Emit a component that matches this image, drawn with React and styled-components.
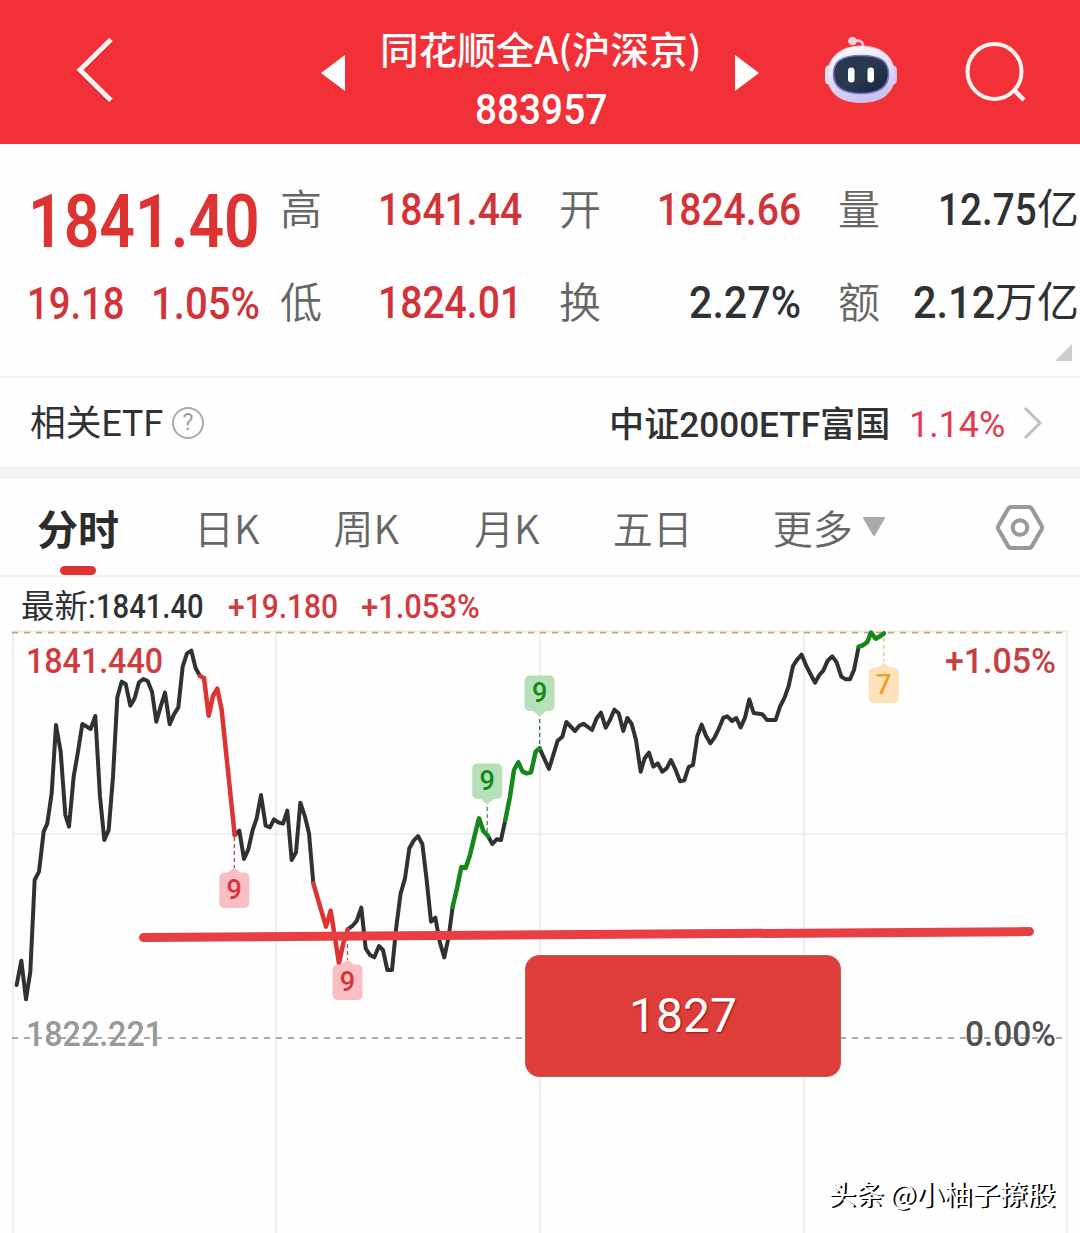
import React, { useLayoutEffect, useRef, useState } from "react";
import styled, { createGlobalStyle } from "styled-components";

const Global = createGlobalStyle`
  *, *::before, *::after { box-sizing: border-box; }
  body { margin: 0; background: #fefefe; overflow: hidden; }
`;

const RED = "#dd3333";
const INK = "#303133";
const NUM = '"Roboto", "Noto Sans CJK SC", sans-serif';
const CJK = '"Noto Sans CJK SC", "Roboto", sans-serif';

const Page = styled.main`
  width: 1080px;
  height: 1233px;
  overflow: hidden;
  background: #fefefe;
  color: ${INK};
  font-family: ${NUM};
  display: flex;
  flex-direction: column;
`;

const FitBox = styled.span`
  display: inline-block;
  flex: none;
  width: ${(p) => p.$w}px;
  height: ${(p) => p.$size * 1.2}px;
  line-height: ${(p) => p.$size * 1.2}px;
  margin-top: ${(p) => p.$dy || 0}px;
  margin-left: ${(p) => p.$ml || 0}px;
  font-family: ${(p) => (p.$cjk ? CJK : NUM)};
  font-size: ${(p) => p.$size}px;
  font-weight: ${(p) => p.$weight || 500};
  color: ${(p) => p.$color || "inherit"};
  white-space: nowrap;
`;

const FitInner = styled.span`
  display: inline-block;
  transform-origin: 0 50%;
`;

/* Condenses a run of text horizontally to the width of its column. */
function Fit({ w, size, weight, color, dy, ml, cjk, children }) {
  const ref = useRef(null);
  const [scale, setScale] = useState(1);
  useLayoutEffect(() => {
    setScale(w / ref.current.offsetWidth);
  }, [w, children]);
  return (
    <FitBox $w={w} $size={size} $weight={weight} $color={color} $dy={dy} $ml={ml} $cjk={cjk}>
      <FitInner ref={ref} style={{ transform: `scaleX(${scale})` }}>{children}</FitInner>
    </FitBox>
  );
}

const Header = styled.header`
  height: 144px;
  flex: none;
  background: #f23037;
  color: #fff;
  display: flex;
  align-items: flex-start;
`;

const HeaderIcon = styled.svg`
  flex: none;
  display: block;
  margin-left: ${(p) => p.$ml}px;
  margin-top: ${(p) => p.$mt}px;
`;

const Title = styled.div`
  width: 322px;
  margin-left: 34px;
  padding-top: 25px;
  display: flex;
  flex-direction: column;
  align-items: center;
`;

const Quote = styled.section`
  height: 234px;
  flex: none;
  padding-top: 20px;
  border-bottom: 2px solid #f4f4f4;
  display: grid;
  grid-template-columns: 280px 279px 279px 242px;
  grid-template-rows: 93px 93px 1fr;
`;

const Cell = styled.div`
  display: flex;
  align-items: center;
  justify-content: space-between;
  padding-right: ${(p) => p.$pr || 0}px;
`;

const PriceCell = styled.div`
  display: flex;
  align-items: center;
  padding-left: ${(p) => p.$pl}px;
  padding-top: ${(p) => p.$pt}px;
`;

const Label = styled.span`
  font-size: 42px;
  line-height: 50px;
  font-weight: 350;
  color: #666;
`;

const Value = styled.span`
  display: flex;
  align-items: center;
`;

const Unit = styled.span`
  font-size: 42px;
  line-height: 50px;
  font-weight: 400;
`;

const Corner = styled.div`
  grid-column: 4;
  justify-self: end;
  margin: -6px 8px 0 0;
  width: 17px;
  height: 17px;
  background: #ccc;
  clip-path: polygon(100% 0, 100% 100%, 0 100%);
`;

const EtfRow = styled.section`
  height: 89px;
  flex: none;
  display: flex;
  align-items: center;
  padding: 0 37px 0 30px;
`;

const Help = styled.span`
  width: 32px;
  height: 32px;
  margin-left: 9px;
  border: 2px solid #aaa;
  border-radius: 50%;
  color: #a0a0a0;
  font: 400 23px/28px ${NUM};
  text-align: center;
`;

const Spacer = styled.span`
  flex: 1;
`;

const MoreArrow = styled.svg`
  display: block;
  flex: none;
  margin-left: 18px;
`;

const Band = styled.div`
  height: 12px;
  flex: none;
  background: #f4f4f4;
`;

const Tabs = styled.nav`
  height: 98px;
  flex: none;
  border-bottom: 2px solid #f1f1f1;
  display: flex;
  align-items: flex-start;
`;

const Tab = styled.div`
  height: 98px;
  margin-left: ${(p) => p.$ml}px;
  display: flex;
  flex-direction: column;
  align-items: center;
`;

const TabLabel = styled.span`
  height: 87px;
  line-height: 97px;
  font-family: ${CJK};
  font-size: ${(p) => (p.$on ? 41 : 40)}px;
  font-weight: ${(p) => (p.$on ? 700 : 350)};
  color: ${(p) => (p.$on ? "#2c2c2e" : "#666")};
  white-space: nowrap;
`;

const Underline = styled.span`
  width: 36px;
  height: 9px;
  border-radius: 5px;
  background: ${RED};
`;

const Latest = styled.div`
  height: 45px;
  flex: none;
  display: flex;
  align-items: center;
  padding: 16px 0 0 21px;
`;

const ChartArea = styled.section`
  position: relative;
  height: 611px;
  flex: none;
`;

const ChartSvg = styled.svg`
  display: block;
`;

const Callout = styled.div`
  position: absolute;
  left: 525px;
  top: 333px;
  width: 316px;
  height: 122px;
  border-radius: 14px;
  background: #de3e3a;
  border: 1px solid #c95a56;
  color: #fff;
  font: 400 48px/120px ${NUM};
  text-align: center;
  text-shadow: 1px 1px 2px rgba(90, 0, 0, 0.6);
`;

const Watermark = styled.div`
  position: absolute;
  left: 828px;
  top: 551px;
  font: 400 27.8px/40px ${CJK};
  color: #fff;
  white-space: nowrap;
  text-shadow: 2px 1px 0 #000;
`;

const BackIcon = () => (
  <HeaderIcon $ml={74} $mt={34} width="42" height="72" viewBox="0 0 42 72" fill="none">
    <path d="M37 5.500L6 36L37 66.500" stroke="#c4161d" strokeWidth="5" transform="translate(0 1.500)" opacity=".6" />
    <path d="M37 5.500L6 36L37 66.500" stroke="#fff4f2" strokeWidth="5" />
  </HeaderIcon>
);

const Robot = () => (
  <HeaderIcon $ml={64} $mt={35} width="74" height="70" viewBox="824 35 74 70">
    <defs>
      <linearGradient id="shell" x1="0" y1="0" x2="0.300" y2="1">
        <stop offset="0" stopColor="#fff" />
        <stop offset=".5" stopColor="#e6e2fb" />
        <stop offset="1" stopColor="#c9c4f4" />
      </linearGradient>
      <linearGradient id="visor" x1="0" y1="0" x2="1" y2="1">
        <stop offset="0" stopColor="#26364f" />
        <stop offset=".5" stopColor="#2a3850" />
        <stop offset="1" stopColor="#17213f" />
      </linearGradient>
    </defs>
    <path d="M854 41 Q864 39 863 48" fill="none" stroke="#f8c9d4" strokeWidth="2.600" />
    <circle cx="852.500" cy="41" r="4.300" fill="#fbd5dc" />
    <rect x="825" y="65" width="10" height="20" rx="5" fill="#f1eaff" />
    <rect x="887" y="65" width="10" height="20" rx="5" fill="#cfc6f6" />
    <path d="M861 46C883 46 894.500 58 894.500 75C894.500 93 882 102.500 861 102.500C840 102.500 827.500 93 827.500 75C827.500 58 840 46 861 46Z" fill="url(#shell)" stroke="#f4c5d8" strokeWidth=".8" />
    <path d="M861 55.500C880 55.500 888.500 61 888.500 74C888.500 87 880 93.500 861 93.500C842 93.500 833.500 87 833.500 74C833.500 61 842 55.500 861 55.500Z" fill="url(#visor)" stroke="#7777ca" strokeWidth="1.600" />
    <rect x="848" y="67.500" width="6.500" height="15" rx="3.200" fill="#fff" />
    <rect x="867.500" y="67.500" width="6.500" height="15" rx="3.200" fill="#fff" />
  </HeaderIcon>
);

const Search = () => (
  <HeaderIcon $ml={66} $mt={38} width="66" height="68" viewBox="964 38 66 68" fill="none" stroke="#fff4f2" strokeWidth="4">
    <ellipse cx="994.500" cy="71.500" rx="27" ry="27.500" />
    <path d="M1014 90L1024 100" strokeWidth="4.500" />
  </HeaderIcon>
);

/* Series points are stored in thirds of a pixel, measured from y = 620. */
const SERIES = [
  { c: INK, p: "50,1095 64,1022 78,1138 91,1055 104,780 117,755 131,635 142,610 155,520 168,315 182,395 196,585 207,620 221,470 234,395 247,312 272,327 286,288 300,530 313,660 326,630 339,470 352,232 365,185 377,192 391,257 404,235 417,187 430,177 443,183 456,215 469,305 482,260 495,218 509,313 522,283 535,262 548,140 561,100 574,92 587,145 600,168" },
  { c: INK, p: "704,645 718,632 732,717 745,688 758,630 770,595 783,525 797,617 810,622 822,598 836,608 849,611 862,572 875,720 888,697 901,548 915,590 927,640 940,790" },
  { c: INK, p: "1043,928 1057,918 1070,903 1084,863 1097,985 1110,1005 1123,1012 1137,978 1149,990 1162,1050 1176,1050 1189,920 1202,820 1215,775 1228,685 1241,662 1254,648 1267,672 1280,780 1293,905 1306,893 1319,965 1333,1012 1346,950 1358,860" },
  { c: INK, p: "1464,648 1477,672 1490,658 1503,660 1516,600" },
  { c: INK, p: "1619,385 1647,447 1673,362 1687,350 1699,306 1725,333 1738,317 1750,311 1776,330 1790,295 1803,278 1817,323 1830,300 1843,269 1856,280 1870,333 1882,294 1895,312 1908,360 1922,455 1934,415 1947,398 1960,440 1973,430 1987,455 2000,445 2013,420 2027,450 2040,484 2053,481 2066,441 2079,435 2092,348 2105,314 2118,347 2131,370 2144,352 2157,325 2170,293 2182,289 2196,303 2209,294 2222,322 2235,293 2248,238 2261,279 2287,283 2301,300 2327,300 2340,260 2354,232 2366,198 2379,138 2392,118 2405,104 2419,138 2445,188 2458,165 2470,152 2483,122 2497,109 2510,127 2524,170 2537,178 2550,178 2562,150 2576,80" },
  { c: RED, p: "600,168 612,174 626,287 639,228 652,206 665,270 704,645" },
  { c: RED, p: "940,790 978,920 992,872 1017,1030 1030,970 1043,928" },
  { c: "#14891a", p: "1358,860 1372,800 1384,741 1397,744 1410,705 1423,650 1437,595 1450,633 1464,648" },
  { c: "#14891a", p: "1516,600 1530,530 1542,450 1555,427 1568,455 1580,460 1593,457 1607,395 1619,385" },
  { c: "#14891a", p: "2576,80 2589,76 2602,66 2613,38 2627,56 2640,49 2652,40" },
];

const MARKS = [
  { x: 234.3, y: 872.5, up: true, from: 837, to: 868, n: "9", bg: "#f9bfc2", fg: "#d8333a", line: "#b8383c" },
  { x: 347.5, y: 964.5, up: true, from: 930, to: 960, n: "9", bg: "#f9bfc2", fg: "#d8333a", line: "#d8383c" },
  { x: 487.2, y: 763.5, from: 807, to: 832, n: "9", bg: "#b6e1b8", fg: "#14891a", line: "#567556" },
  { x: 539.6, y: 675.5, from: 719, to: 748, n: "9", bg: "#b6e1b8", fg: "#14891a", line: "#2f7532" },
  { x: 883.8, y: 667.5, up: true, from: 638, to: 662, n: "7", bg: "#fde1b9", fg: "#eda12c", line: "#d9c378" },
];

function Mark({ m }) {
  const tip = m.up
    ? `M${m.x - 7} ${m.y + 0.5}L${m.x} ${m.y - 5}L${m.x + 7} ${m.y + 0.5}Z`
    : `M${m.x - 7} ${m.y + 35}L${m.x} ${m.y + 41}L${m.x + 7} ${m.y + 35}Z`;
  return (
    <g>
      <path d={`M${m.x} ${m.from}V${m.to}`} stroke={m.line} strokeWidth="1.200" strokeDasharray="4 3" />
      <rect x={m.x - 15} y={m.y} width="30" height="35.500" rx="5" fill={m.bg} />
      <path d={tip} fill={m.bg} />
      <text x={m.x} y={m.y + 26} textAnchor="middle" fontFamily={NUM} fontSize="27" fontWeight="500" fill={m.fg}>{m.n}</text>
    </g>
  );
}

const AxisText = ({ x, y, w, fill, children }) => (
  <text x={x} y={y} textLength={w} lengthAdjust="spacingAndGlyphs" fontFamily={NUM} fontSize="35" fontWeight="500" fill={fill}>{children}</text>
);

function Chart() {
  return (
    <ChartSvg width="1080" height="611" viewBox="0 622 1080 611" fill="none">
      <path d="M12 631.500H1067M12 834H1067M13 631V1233M276 631V1233M540 631V1233M804 631V1233M1067 631V1233" stroke="#ececec" strokeWidth="1.600" />
      <path d="M12 631.500H1067" stroke="#f8ebdd" strokeWidth="1.500" />
      <path d="M12 632.700H1064" stroke="#bba886" strokeWidth="1.700" strokeDasharray="6 6" />
      <path d="M12 1038H1063" stroke="#aaa" strokeWidth="1.800" strokeDasharray="6 6" />
      <AxisText x={26} y={673} w={137} fill="#cf3b3f">1841.440</AxisText>
      <AxisText x={945} y={673} w={111} fill="#c63f42">+1.05%</AxisText>
      <AxisText x={26} y={1046} w={137} fill="#999">1822.221</AxisText>
      <AxisText x={965} y={1046} w={91} fill="#505050">0.00%</AxisText>
      <g transform="translate(0 620) scale(.33333)" strokeWidth="12" strokeLinejoin="round" strokeLinecap="round">
        {SERIES.map((s, i) => (
          <polyline key={i} points={s.p} stroke={s.c} strokeWidth={s.c === INK ? 12 : 13.5} />
        ))}
      </g>
      {MARKS.map((m, i) => <Mark key={i} m={m} />)}
      <path d="M143.500 937.500L1029.500 931.600" stroke="#e64043" strokeWidth="9" strokeLinecap="round" />
    </ChartSvg>
  );
}

export default function App() {
  return (
    <Page>
      <Global />
      <Header>
        <BackIcon />
        <HeaderIcon $ml={205} $mt={55} width="25" height="36" viewBox="0 0 25 36"><path d="M0 18L24 0V36Z" fill="#fff" /></HeaderIcon>
        <Title>
          <Fit cjk w={322} size={37.5}>同花顺全A(沪深京)</Fit>
          <Fit w={132} size={42} dy={15}>883957</Fit>
        </Title>
        <HeaderIcon $ml={33} $mt={55} width="25" height="36" viewBox="0 0 25 36"><path d="M24 18L0 0V36Z" fill="#fff" /></HeaderIcon>
        <Robot />
        <Search />
      </Header>
      <Quote>
        <PriceCell $pl={28} $pt={24}><Fit w={232} size={74} weight={600} color={RED}>1841.40</Fit></PriceCell>
        <Cell $pr={37}><Label>高</Label><Fit w={144} size={44.5} color="#d13338">1841.44</Fit></Cell>
        <Cell $pr={37}><Label>开</Label><Fit w={144} size={44.5} color="#d13338">1824.66</Fit></Cell>
        <Cell $pr={1}><Label>量</Label><Value><Fit w={99} size={44.5}>12.75</Fit><Unit>亿</Unit></Value></Cell>
        <PriceCell $pl={27} $pt={3}>
          <Fit w={98} size={44.5} color="#d13338">19.18</Fit>
          <Fit w={109} size={44.5} ml={26} color="#d13338">1.05%</Fit>
        </PriceCell>
        <Cell $pr={37}><Label>低</Label><Fit w={144} size={44.5} color="#d13338">1824.01</Fit></Cell>
        <Cell $pr={37}><Label>换</Label><Fit w={112} size={44.5}>2.27%</Fit></Cell>
        <Cell $pr={1}><Label>额</Label><Value><Fit w={82} size={44.5}>2.12</Fit><Unit>万亿</Unit></Value></Cell>
        <Corner />
      </Quote>
      <EtfRow>
        <Fit w={133} size={36} weight={400} dy={5}>相关ETF</Fit>
        <Help>?</Help>
        <Spacer />
        <Fit w={281} size={35.5} dy={5}>中证2000ETF富国</Fit>
        <Fit w={96} ml={19} size={37} weight={400} dy={5} color="#e23a50">1.14%</Fit>
        <MoreArrow width="20" height="36" viewBox="0 0 20 36" fill="none"><path d="M2 3L17 18L2 33" stroke="#bfbfbf" strokeWidth="3" /></MoreArrow>
      </EtfRow>
      <Band />
      <Tabs>
        <Tab $ml={37}><TabLabel $on>分时</TabLabel><Underline /></Tab>
        <Tab $ml={75}><TabLabel>日K</TabLabel></Tab>
        <Tab $ml={74}><TabLabel>周K</TabLabel></Tab>
        <Tab $ml={75}><TabLabel>月K</TabLabel></Tab>
        <Tab $ml={73}><TabLabel>五日</TabLabel></Tab>
        <Tab $ml={80}><TabLabel>更多</TabLabel></Tab>
        <HeaderIcon $ml={9} $mt={38} width="24" height="20" viewBox="0 0 24 20"><path d="M2 1H22L12 18Z" fill="#aaa" stroke="#aaa" strokeWidth="2" strokeLinejoin="round" /></HeaderIcon>
        <HeaderIcon $ml={109} $mt={24} width="50" height="50" viewBox="0 0 50 50" fill="none" stroke="#999" strokeWidth="4">
          <path d="M16 4H34Q36 4 37 6L46.500 22.500Q47.500 24.500 46.500 26.500L37 43Q36 45 34 45H16Q14 45 13 43L3.500 26.500Q2.500 24.500 3.500 22.500L13 6Q14 4 16 4Z" />
          <circle cx="25" cy="24.500" r="7.300" />
        </HeaderIcon>
      </Tabs>
      <Latest>
        <Fit w={75} size={32.5} weight={400}>最新:</Fit>
        <Fit w={108} size={33.500}>1841.40</Fit>
        <Fit w={110} ml={24} size={33.500} color="#cf3b3f">+19.180</Fit>
        <Fit w={119} ml={23} size={33.500} color="#cf3b3f">+1.053%</Fit>
      </Latest>
      <ChartArea>
        <Chart />
        <Callout>1827</Callout>
        <Watermark>头条 @小柚子撩股</Watermark>
      </ChartArea>
    </Page>
  );
}
